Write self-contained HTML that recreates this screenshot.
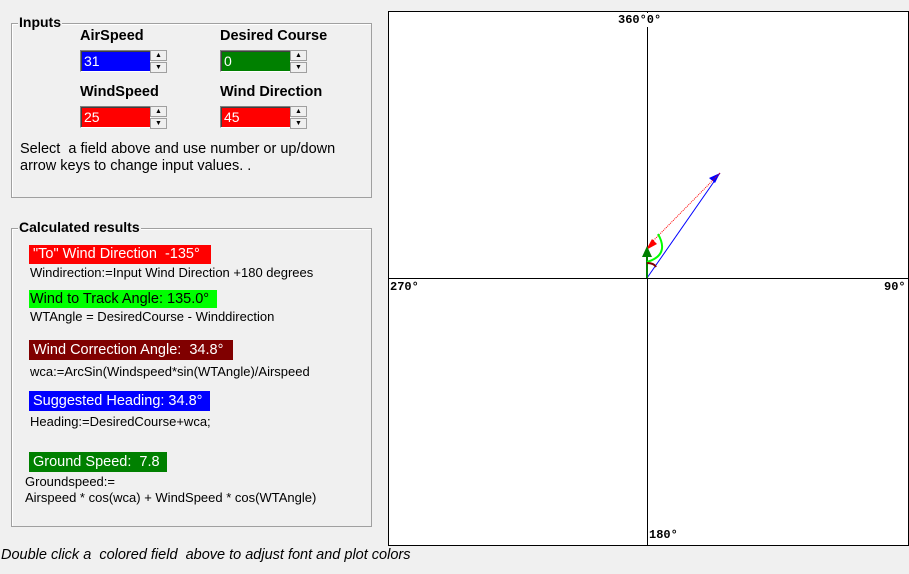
<!DOCTYPE html>
<html><head><style>
body{margin:0;width:909px;height:574px;background:#f0f0f0;position:relative;overflow:hidden;font-family:"Liberation Sans",Arial,sans-serif;}
.a{position:absolute;white-space:nowrap;}
.grp{position:absolute;border:1px solid #a0a0a0;box-shadow:inset 1px 1px 0 #fff;}
.gt{position:absolute;background:#f0f0f0;font-weight:bold;font-size:14px;padding:0 1px;}
.lbl{position:absolute;font-weight:bold;font-size:14.5px;}
.fld{position:absolute;width:66px;height:20px;border:1px solid #808080;border-right-color:#fff;border-bottom-color:#fff;box-shadow:inset 1px 1px 0 #404040;color:#fff;font-size:14px;line-height:21px;padding-left:3px;box-sizing:content-box;}
.sp{position:absolute;width:17px;height:11px;background:#f0f0f0;border:1px solid #a0a0a0;box-sizing:border-box;font-size:7px;text-align:center;line-height:9px;}
.res{position:absolute;color:#fff;font-size:14.5px;line-height:20px;padding-left:4px;box-sizing:border-box;white-space:nowrap;}
.f{position:absolute;font-size:13px;color:#000;white-space:nowrap;}
.cl{position:absolute;font:bold 12px "Liberation Mono","DejaVu Sans Mono",monospace;background:#fff;}
</style></head><body>
<div class="grp" style="left:11px;top:23px;width:359px;height:173px"></div>
<div class="gt" style="left:18px;top:14px">Inputs</div>
<div class="lbl" style="left:80px;top:28px">AirSpeed</div>
<div class="lbl" style="left:220px;top:28px">Desired Course</div>
<div class="lbl" style="left:80px;top:84px">WindSpeed</div>
<div class="lbl" style="left:220px;top:84px">Wind Direction</div>
<div class="fld" style="left:80px;top:50px;background:#0000ff">31</div>
<div class="fld" style="left:220px;top:50px;background:#008000">0</div>
<div class="fld" style="left:80px;top:106px;background:#ff0000">25</div>
<div class="fld" style="left:220px;top:106px;background:#ff0000">45</div>
<div class="sp" style="left:150px;top:50px">▲</div><div class="sp" style="left:150px;top:62px">▼</div>
<div class="sp" style="left:290px;top:50px">▲</div><div class="sp" style="left:290px;top:62px">▼</div>
<div class="sp" style="left:150px;top:106px">▲</div><div class="sp" style="left:150px;top:118px">▼</div>
<div class="sp" style="left:290px;top:106px">▲</div><div class="sp" style="left:290px;top:118px">▼</div>
<div class="a" style="left:20px;top:141px;font-size:14.5px;line-height:17px">Select&nbsp; a field above and use number or up/down<br>arrow keys to change input values. .</div>

<div class="grp" style="left:11px;top:228px;width:359px;height:297px"></div>
<div class="gt" style="left:18px;top:219px">Calculated results</div>
<div class="res" style="left:29px;top:245px;width:182px;height:19px;background:#ff0000;line-height:19px">"To" Wind Direction&nbsp; -135°</div>
<div class="f" style="left:30px;top:265px">Windirection:=Input Wind Direction +180 degrees</div>
<div class="res" style="left:29px;top:290px;width:188px;height:18px;background:#00ff00;color:#000;padding-left:1px;line-height:18px">Wind to Track Angle: 135.0°</div>
<div class="f" style="left:30px;top:309px">WTAngle = DesiredCourse - Winddirection</div>
<div class="res" style="left:29px;top:340px;width:204px;height:20px;background:#800000">Wind Correction Angle:&nbsp; 34.8°</div>
<div class="f" style="left:30px;top:364px">wca:=ArcSin(Windspeed*sin(WTAngle)/Airspeed</div>
<div class="res" style="left:29px;top:391px;width:181px;height:20px;background:#0000ff">Suggested Heading: 34.8°</div>
<div class="f" style="left:30px;top:414px">Heading:=DesiredCourse+wca;</div>
<div class="res" style="left:29px;top:452px;width:138px;height:20px;background:#008000">Ground Speed:&nbsp; 7.8</div>
<div class="f" style="left:25px;top:474px;line-height:16px">Groundspeed:=<br>Airspeed * cos(wca) + WindSpeed * cos(WTAngle)</div>
<div class="a" style="left:1px;top:547px;font-size:14.5px;font-style:italic">Double click a&nbsp; colored field&nbsp; above to adjust font and plot colors</div>

<svg class="a" style="left:0;top:0" width="909" height="574">
<rect x="388.5" y="11.5" width="520" height="534" fill="#fff" stroke="#000"/>
<line x1="647.5" y1="12" x2="647.5" y2="545" stroke="#000"/>
<line x1="389" y1="278.5" x2="908" y2="278.5" stroke="#000"/>
<line x1="647" y1="278" x2="720" y2="173" stroke="#0000ff"/>
<polygon points="720,173 709,178 715,183" fill="#0000ff"/>
<line x1="720" y1="173" x2="652" y2="242" stroke="#ff0000" stroke-dasharray="1,1"/>
<polygon points="648,245 659,239 654,234" fill="#ff0000" transform="translate(-2,5)"/>
<line x1="647" y1="278" x2="647" y2="256" stroke="#008000" stroke-width="2"/>
<polygon points="647,246 642,257 652,257" fill="#008000"/>
<path d="M658,234 Q670,255 647,262" fill="none" stroke="#00ff00" stroke-width="2"/>
<path d="M647,263 Q654,263 656,267" fill="none" stroke="#800000" stroke-width="2"/>
</svg>
<div class="cl" style="left:618px;top:13px">360°0°</div>
<div class="cl" style="left:390px;top:280px">270°</div>
<div class="cl" style="left:884px;top:280px">90°</div>
<div class="cl" style="left:649px;top:528px">180°</div>
</body></html>
